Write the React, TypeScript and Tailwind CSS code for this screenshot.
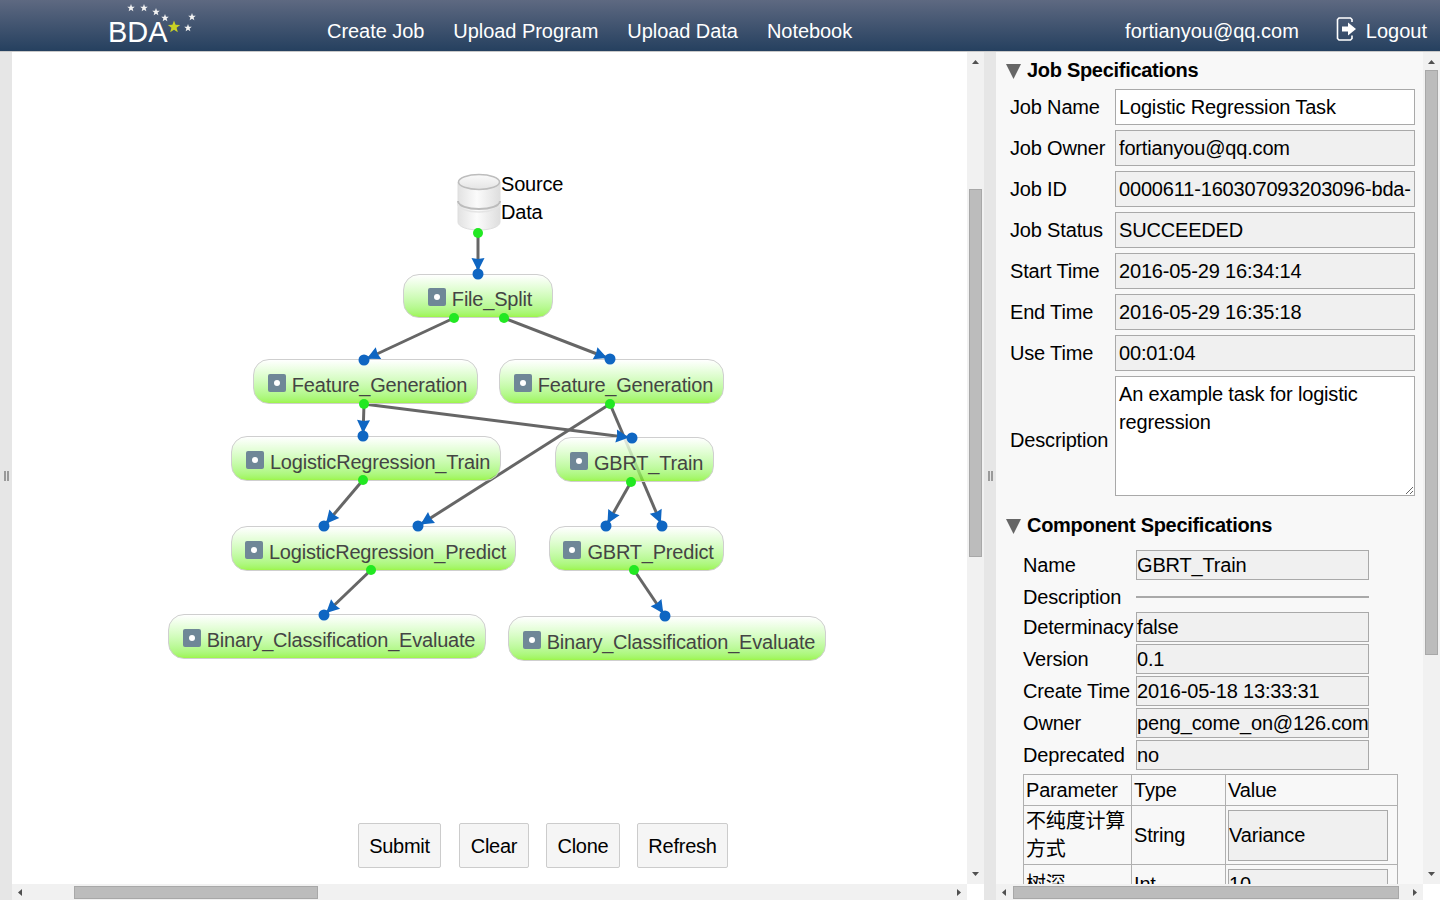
import React from 'react';

const PORTS_OUT: [number, number][] = [
  [466, 181], [442, 266], [492, 266], [352, 352], [598, 352], [351, 428], [619, 430], [359, 518], [622, 518],
];
const PORTS_IN: [number, number][] = [
  [466, 222], [352, 308], [598, 307], [351, 384], [620, 386], [312, 474], [406, 474], [594, 474], [650, 474], [312, 563], [653, 564],
];
// from, to in canvas coords (canvas starts at 12,52)
const EDGES: [number, number, number, number][] = [
  [466, 181, 466, 222],
  [442, 266, 352, 308],
  [492, 266, 598, 307],
  [352, 352, 351, 384],
  [352, 352, 620, 386],
  [598, 352, 406, 474],
  [598, 352, 650, 474],
  [351, 428, 312, 474],
  [619, 430, 594, 474],
  [359, 518, 312, 563],
  [622, 518, 653, 564],
];

const NODES = [
  { name: 'File_Split', x: 391, y: 222, w: 150, h: 44 },
  { name: 'Feature_Generation', x: 241, y: 307, w: 225, h: 45 },
  { name: 'Feature_Generation', x: 487, y: 307, w: 225, h: 45 },
  { name: 'LogisticRegression_Train', x: 219, y: 384, w: 270, h: 45 },
  { name: 'GBRT_Train', x: 543, y: 385, w: 159, h: 45 },
  { name: 'LogisticRegression_Predict', x: 219, y: 474, w: 285, h: 45 },
  { name: 'GBRT_Predict', x: 537, y: 474, w: 175, h: 45 },
  { name: 'Binary_Classification_Evaluate', x: 156, y: 562, w: 318, h: 45 },
  { name: 'Binary_Classification_Evaluate', x: 496, y: 564, w: 318, h: 45 },
];

function arrowPoints(x1: number, y1: number, x2: number, y2: number) {
  const len = Math.hypot(x2 - x1, y2 - y1);
  const ux = (x2 - x1) / len;
  const uy = (y2 - y1) / len;
  const tx = x2 - ux * 3;
  const ty = y2 - uy * 3;
  const bx = tx - ux * 13;
  const by = ty - uy * 13;
  const nx = bx + ux;
  const ny = by + uy;
  return `${tx},${ty} ${bx - uy * 6.5},${by + ux * 6.5} ${nx},${ny} ${bx + uy * 6.5},${by - ux * 6.5}`;
}

function starPoints(cx: number, cy: number, r: number) {
  const pts: string[] = [];
  for (let i = 0; i < 10; i++) {
    const a = -Math.PI / 2 + (i * Math.PI) / 5;
    const rad = i % 2 === 0 ? r : r * 0.42;
    pts.push(`${cx + Math.cos(a) * rad},${cy + Math.sin(a) * rad}`);
  }
  return pts.join(' ');
}

const Logo = () => (
  <div className="relative w-[90px] h-[52px] ml-[107px] shrink-0">
    <span className="absolute left-[1px] top-[14px] text-[29px] leading-[36px] text-white">BDA</span>
    <svg className="absolute left-0 top-0" width="90" height="52">
      {[[24, 8], [37, 8], [49, 12], [58, 18], [85, 17], [81, 28]].map(([x, y], i) => (
        <polygon key={i} points={starPoints(x, y, 4)} fill="#f2f2f2" />
      ))}
      <polygon points={starPoints(67, 27, 6.5)} fill="#c9d224" />
    </svg>
  </div>
);

const LogoutIcon = () => (
  <svg width="22" height="26" viewBox="0 0 22 26" className="mr-[8px] mt-[-3px]">
    <path d="M16 6V3.500L14.500 2H3L1.500 3.500V22.500L3 24H14.500L16 22.500V19.500" fill="none" stroke="white" strokeWidth="1.600" />
    <path d="M6 10.500H12V6.500L20 13L12 19.500V15.500H6Z" fill="white" />
  </svg>
);

const Header = () => (
  <div className="h-[52px] shrink-0 flex items-center bg-linear-to-b from-[#5e6981] to-[#25405f] border-b border-[#c9c9c9] text-white text-[20px]">
    <Logo />
    <nav className="flex gap-[29px] ml-[130px] mt-[10px] tracking-[-0.05px]">
      <span>Create Job</span>
      <span>Upload Program</span>
      <span>Upload Data</span>
      <span>Notebook</span>
    </nav>
    <div className="ml-auto flex items-center mr-[13px] mt-[10px]">
      <span className="mr-[37px]">fortianyou@qq.com</span>
      <LogoutIcon />
      <span>Logout</span>
    </div>
  </div>
);

const Cylinder = () => (
  <svg width="44" height="58" viewBox="0 0 44 58">
    <defs>
      <linearGradient id="cyl" x1="0" x2="1" y1="0" y2="0">
        <stop offset="0" stopColor="#e2e2e2" />
        <stop offset="0.45" stopColor="#fbfbfb" />
        <stop offset="1" stopColor="#dedede" />
      </linearGradient>
      <linearGradient id="cap" x1="0" x2="0" y1="0" y2="1">
        <stop offset="0" stopColor="#fafafa" />
        <stop offset="1" stopColor="#e4e4e4" />
      </linearGradient>
    </defs>
    <path d="M1 9V49C1 54 11 57 22 57C33 57 43 54 43 49V9Z" fill="url(#cyl)" stroke="#dedede" />
    <ellipse cx="22" cy="9" rx="20.500" ry="7.500" fill="url(#cap)" stroke="#bdbdbd" strokeWidth="1.500" />
    <path d="M1 28C1 33 11 36 22 36C33 36 43 33 43 28" fill="none" stroke="#bcbcbc" strokeWidth="2" />
    <path d="M1 31C1 36 11 39 22 39C33 39 43 36 43 31" fill="none" stroke="#e4e4e4" strokeWidth="1.500" />
  </svg>
);

const FlowNode = ({ name, x, y, w, h }: (typeof NODES)[number]) => (
  <div
    className="absolute flex items-center justify-center pl-[4px] pt-[6px] rounded-[16px] border border-[#cfcfcf] bg-linear-to-b from-white/85 to-[#7df200]/75 text-[#444] text-[20px] tracking-[-0.2px] whitespace-nowrap"
    style={{ left: x, top: y, width: w, height: h }}
  >
    <span className="w-[18px] h-[18px] rounded-[2px] bg-[#6f8797] flex items-center justify-center mr-[6px] mt-[-4px] shrink-0">
      <span className="w-[6px] h-[6px] rounded-full bg-white" />
    </span>
    {name}
  </div>
);

const Canvas = () => (
  <div className="relative flex-1 bg-white overflow-hidden text-[20px] text-black">
    <div className="absolute left-[445px] top-[121px]">
      <Cylinder />
    </div>
    <div className="absolute left-[489px] top-[118px] leading-[28px] tracking-[-0.2px]">
      Source
      <br />
      Data
    </div>
    <svg className="absolute inset-0" width="955" height="832">
      {EDGES.map(([x1, y1, x2, y2], i) => (
        <line key={i} x1={x1} y1={y1} x2={x2} y2={y2} stroke="#666" strokeWidth="3" />
      ))}
    </svg>
    {NODES.map((n, i) => (
      <FlowNode key={i} {...n} />
    ))}
    <svg className="absolute inset-0" width="955" height="832">
      {EDGES.map(([x1, y1, x2, y2], i) => (
        <polygon key={i} points={arrowPoints(x1, y1, x2, y2)} fill="#0f66c2" />
      ))}
      {PORTS_IN.map(([x, y], i) => (
        <circle key={i} cx={x} cy={y} r="5.500" fill="#0f66c2" />
      ))}
      {PORTS_OUT.map(([x, y], i) => (
        <circle key={i} cx={x} cy={y} r="5" fill="#22e822" />
      ))}
    </svg>
    <div className="absolute left-[346px] top-[771px] flex gap-[17px] tracking-[-0.25px]">
      <button className="w-[83px] h-[45px] mr-[1px] bg-[#f5f5f5] border border-[#cccccc] rounded-[2px] text-black">Submit</button>
      <button className="w-[70px] h-[45px] bg-[#f5f5f5] border border-[#cccccc] rounded-[2px] text-black">Clear</button>
      <button className="w-[74px] h-[45px] bg-[#f5f5f5] border border-[#cccccc] rounded-[2px] text-black">Clone</button>
      <button className="w-[91px] h-[45px] bg-[#f5f5f5] border border-[#cccccc] rounded-[2px] text-black">Refresh</button>
    </div>
  </div>
);

const VScrollbar = ({ top, height }: { top: number; height: number }) => (
  <div className="relative w-[17px] shrink-0 bg-[#f1f1f1]">
    <svg className="absolute left-[5px] top-[8px]" width="7" height="4">
      <polygon points="3.500,0 7,4 0,4" fill="#505050" />
    </svg>
    <div className="absolute left-[2px] w-[13px] bg-[#bcbcbc] border border-[#a8a8a8]" style={{ top, height }} />
    <svg className="absolute left-[5px] bottom-[8px]" width="7" height="4">
      <polygon points="0,0 7,0 3.500,4" fill="#505050" />
    </svg>
  </div>
);

const HScrollbar = ({ left, width }: { left: number; width: number }) => (
  <div className="relative h-[16px] shrink-0 bg-[#f1f1f1]">
    <svg className="absolute left-[6px] top-[5px]" width="4" height="7">
      <polygon points="4,0 4,7 0,3.500" fill="#505050" />
    </svg>
    <div className="absolute top-[2px] h-[13px] bg-[#bcbcbc] border border-[#a8a8a8]" style={{ left, width }} />
    <svg className="absolute right-[6px] top-[5px]" width="4" height="7">
      <polygon points="0,0 4,3.500 0,7" fill="#505050" />
    </svg>
  </div>
);

const Splitter = () => (
  <div className="w-[12px] shrink-0 bg-[#e6e6e6] flex items-center justify-center">
    <span className="w-[5px] h-[10px] mb-[1px] border-x-2 border-[#9a9a9a]" />
  </div>
);

const SectionTitle = ({ children }: { children: React.ReactNode }) => (
  <div className="flex items-center font-bold h-[24px] tracking-[-0.3px]">
    <svg width="15" height="15" className="mr-[6px] mt-[3px]">
      <polygon points="0,0 15,0 7.500,15" fill="#666" />
    </svg>
    {children}
  </div>
);

const JOB_ROWS = [
  ['Job Name', 'Logistic Regression Task', true],
  ['Job Owner', 'fortianyou@qq.com', false],
  ['Job ID', '0000611-160307093203096-bda-oozie-W', false],
  ['Job Status', 'SUCCEEDED', false],
  ['Start Time', '2016-05-29 16:34:14', false],
  ['End Time', '2016-05-29 16:35:18', false],
  ['Use Time', '00:01:04', false],
] as const;

const COMP_ROWS = [
  ['Determinacy', 'false'],
  ['Version', '0.1'],
  ['Create Time', '2016-05-18 13:33:31'],
  ['Owner', 'peng_come_on@126.com'],
  ['Deprecated', 'no'],
];

const CompRow = ({ label, value }: { label: string; value: string }) => (
  <div className="flex items-center h-[30px] mb-[2px]">
    <span className="w-[113px] whitespace-nowrap">{label}</span>
    <input
      readOnly
      value={value}
      className="w-[233px] h-[30px] pl-0 bg-[#f0f0f0] border border-[#a9a9a9] outline-none"
    />
  </div>
);

const ParamCell = ({ children, className = '' }: { children: React.ReactNode; className?: string }) => (
  <td className={`border border-[#b0b0b0] px-[2px] align-middle ${className}`}>{children}</td>
);

const RightPanel = () => (
  <div className="flex-1 flex flex-col min-w-0">
    <div className="flex-1 flex min-h-0">
      <div className="flex-1 bg-[#f8f8f8] overflow-hidden text-[20px] text-black tracking-[-0.17px] pt-[6px] pl-[10px]">
        <SectionTitle>Job Specifications</SectionTitle>
        <div className="mt-[7px] pl-[4px] flex flex-col gap-[5px]">
          {JOB_ROWS.map(([label, value, editable]) => (
            <div key={label} className="flex items-center h-[36px]">
              <span className="w-[105px] shrink-0">{label}</span>
              <input
                readOnly
                value={value}
                className={`w-[300px] h-[36px] px-[3px] border border-[#a9a9a9] outline-none ${editable ? 'bg-white' : 'bg-[#f0f0f0]'}`}
              />
            </div>
          ))}
          <div className="flex items-center h-[120px]">
            <span className="w-[105px] shrink-0 mt-[8px]">Description</span>
            <textarea
              readOnly
              value="An example task for logistic regression"
              className="w-[300px] h-[120px] px-[3px] py-[3px] leading-[28px] bg-white border border-[#a9a9a9] outline-none"
            />
          </div>
        </div>
        <div className="mt-[17px]">
          <SectionTitle>Component Specifications</SectionTitle>
        </div>
        <div className="mt-[13px] pl-[17px]">
          <CompRow label="Name" value="GBRT_Train" />
          <div className="flex items-center h-[30px]">
            <span className="w-[113px]">Description</span>
            <span className="w-[233px] h-[2px] bg-[#a9a9a9]" />
          </div>
          {COMP_ROWS.map(([label, value]) => (
            <CompRow key={label} label={label} value={value} />
          ))}
          <table className="mt-[4px] w-[375px] border-collapse table-fixed">
            <colgroup>
              <col className="w-[108px]" />
              <col className="w-[94px]" />
              <col />
            </colgroup>
            <tbody>
              <tr className="h-[31px]">
                <ParamCell>Parameter</ParamCell>
                <ParamCell>Type</ParamCell>
                <ParamCell>Value</ParamCell>
              </tr>
              <tr className="h-[59px]">
                <ParamCell className="leading-[28px] font-['Liberation_Sans','Noto_Sans_CJK_SC',sans-serif]">
                  不纯度计算方式
                </ParamCell>
                <ParamCell>String</ParamCell>
                <ParamCell>
                  <input
                    readOnly
                    value="Variance"
                    className="block w-[160px] h-[51px] p-0 bg-[#f0f0f0] border border-[#a9a9a9] outline-none"
                  />
                </ParamCell>
              </tr>
              <tr className="h-[38px]">
                <ParamCell className="font-['Liberation_Sans','Noto_Sans_CJK_SC',sans-serif]">树深</ParamCell>
                <ParamCell>Int</ParamCell>
                <ParamCell>
                  <input
                    readOnly
                    value="10"
                    className="block w-[160px] h-[30px] p-0 bg-[#f0f0f0] border border-[#a9a9a9] outline-none"
                  />
                </ParamCell>
              </tr>
            </tbody>
          </table>
        </div>
      </div>
      <VScrollbar top={18} height={585} />
    </div>
    <div className="flex">
      <div className="flex-1">
        <HScrollbar left={17} width={386} />
      </div>
      <div className="w-[17px] bg-white" />
    </div>
  </div>
);

export default function App() {
  return (
    <div className="h-[900px] w-[1440px] overflow-hidden flex flex-col font-['Liberation_Sans',Arial,sans-serif]">
      <Header />
      <div className="flex-1 flex min-h-0">
        <Splitter />
        <div className="w-[972px] shrink-0 flex flex-col">
          <div className="flex-1 flex min-h-0">
            <Canvas />
            <VScrollbar top={137} height={368} />
          </div>
          <div className="flex">
            <div className="flex-1">
              <HScrollbar left={62} width={244} />
            </div>
            <div className="w-[17px] bg-white" />
          </div>
        </div>
        <Splitter />
        <RightPanel />
      </div>
    </div>
  );
}
